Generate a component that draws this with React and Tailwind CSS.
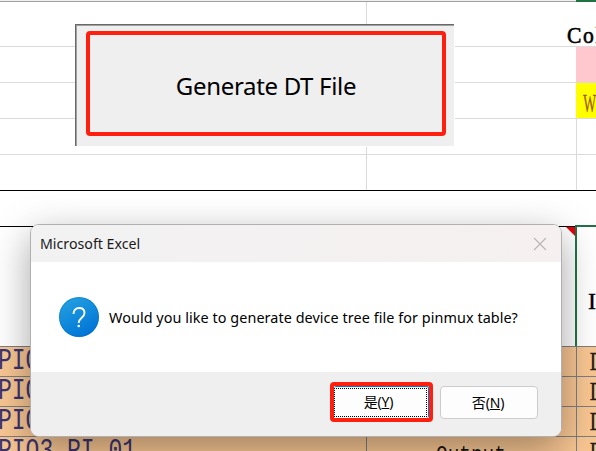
import React from "react";

const mono = "font-['Liberation_Mono',monospace]";
const serif = "font-['Liberation_Serif',serif]";

function Row({ h, line, a, b, c, bg = "", colLine = "border-[#dadada]", cClass = "" }) {
  return (
    <div className={`grid shrink-0 grid-cols-[367px_210px_19px] overflow-hidden border-b ${h} ${line} ${bg}`}>
      <div className={`border-r ${colLine} overflow-hidden`}>{a}</div>
      <div className={`border-r ${colLine} overflow-hidden`}>{b}</div>
      <div className={cClass}>{c}</div>
    </div>
  );
}

function PinText({ children }) {
  return (
    <span className={`${mono} mt-[1px] -ml-[2px] block origin-center scale-y-125 text-[23px] leading-[29px] whitespace-pre text-[#3c3470]`}>
      {children}
    </span>
  );
}

function DataRow({ name, out }) {
  return (
    <Row
      h="h-[30px]"
      line="border-[#7b7f84]"
      colLine="border-[#7b7f84]"
      bg="bg-[#f8c692]"
      a={<PinText>{name}</PinText>}
      b={out && <span className={`${mono} block origin-top scale-y-120 pt-[3px] pl-[69px] text-[19.4px] leading-[26px] text-[#1a1410]`}>{out}</span>}
      c={<span className={`${serif} block origin-left scale-x-80 pl-[16px] text-[25px] leading-[30px] text-[#221c1c] [-webkit-text-stroke:0.3px_#221c1c]`}>D</span>}
    />
  );
}

function Sheet() {
  return (
    <div className="flex h-[451px] w-[596px] flex-col overflow-hidden bg-white">
      <div className="flex h-[2px] shrink-0 border-b border-[#a0a0a0] bg-[#f0f0f0]">
        <div className="w-[576px]" />
        <div className="h-[2px] flex-1 bg-[#217346]" />
      </div>
      <div className="grid h-[45px] shrink-0 grid-cols-[367px_200px_29px] border-b border-[#dadada]">
        <div className="border-r border-[#dadada]" />
        <div />
        <div className="overflow-hidden pt-[20px]">
          <span className={`${serif} block w-[40px] origin-left scale-x-90 text-[24px] leading-[27px] tracking-[1.8px] [-webkit-text-stroke:0.6px_black]`}>
            Col
          </span>
        </div>
      </div>
      <Row h="h-[36px]" line="border-[#dadada]" cClass="-ml-[1px] -mt-px bg-[#ffc7ce]" />
      <Row
        h="h-[36px]"
        line="border-[#dadada]"
        cClass="-ml-[1px] -mt-px -mb-px bg-[#ffff00]"
        c={
          <span className={`${serif} block w-[40px] origin-left scale-x-52 pt-[8px] pl-[14px] text-[26px] leading-[28px] text-[#9c5700] [-webkit-text-stroke:0.3px_#9c5700]`}>
            W
          </span>
        }
      />
      <Row h="h-[36px]" line="border-[#dadada]" />
      <Row h="h-[36px]" line="border-black" />
      <div className="h-[36px] shrink-0 border-b border-black" />
      <div className="grid h-[120px] shrink-0 grid-cols-[575px_21px] border-b border-[#7b7f84]">
        <div className="flex justify-end">
          <div className="h-[9px] w-[9px] bg-red-600 [clip-path:polygon(0_0,100%_0,100%_100%)]" />
        </div>
        <div className="-mt-[2px] border-t-2 border-l-2 border-[#217346]">
          <span className={`${serif} block pt-[60px] pl-[11px] text-[24px] leading-[28px] [-webkit-text-stroke:0.4px_black]`}>I</span>
        </div>
      </div>
      <DataRow name="PIO3_PI_04" />
      <DataRow name="PIO3_PI_03" />
      <DataRow name="PIO3_PI_02" />
      <DataRow name="PIO3_PI_01" out="Output" />
    </div>
  );
}

function QuestionIcon() {
  return (
    <svg width="40" height="40" viewBox="0 0 40 40" fill="none">
      <defs>
        <linearGradient id="blue" x1="8" y1="2" x2="28" y2="39" gradientUnits="userSpaceOnUse">
          <stop stopColor="#229fe0" />
          <stop offset="1" stopColor="#0074d6" />
        </linearGradient>
      </defs>
      <circle cx="20" cy="20" r="20" fill="url(#blue)" />
      <circle cx="20" cy="20" r="19.4" stroke="#0868b8" strokeOpacity=".35" />
      <path d="M14.500 17c0-3.700 2.200-6 5.600-6 3.300 0 5.400 2 5.400 5 0 4.700-5.800 5-5.800 10" stroke="white" strokeWidth="1.9" />
      <circle cx="19.700" cy="29" r="1.300" fill="white" />
    </svg>
  );
}

function Dialog() {
  return (
    <div className="absolute top-[224px] left-[30px] flex h-[213px] w-[532px] flex-col overflow-hidden rounded-[9px] border border-[#b0b0b0] bg-white font-['Noto_Sans','Noto_Sans_CJK_SC',sans-serif] text-black">
      <div className="flex h-[37px] shrink-0 items-center justify-between bg-gradient-to-r from-[#f2f2f3] to-[#f6f0f0] pr-[14px] pl-[9px]">
        <span className="text-[14.2px] text-[#1a1a1a]">Microsoft Excel</span>
        <svg width="14" height="14" viewBox="0 0 14 14" stroke="#b9b5b5" strokeWidth="1.1">
          <path d="M1 1l12 12M13 1L1 13" />
        </svg>
      </div>
      <div className="flex h-[110px] shrink-0 items-center gap-[10px] pl-[28px]">
        <QuestionIcon />
        <span className="pt-[2px] text-[14.4px] tracking-[0.06px] whitespace-nowrap">Would you like to generate device tree file for pinmux table?</span>
      </div>
      <div className="flex flex-1 items-start justify-end gap-[7px] bg-[#efefef] pt-[10px] pr-[23px] text-[14px] tracking-[-0.2px]">
        <div className="h-[40px] w-[103px] rounded-[4px] border-4 border-[#ff1f0f] bg-[#fdfdfd]">
          <div className="flex h-full items-center justify-center rounded-[2px] border-t border-r border-[#0078d4]">
            <div className="mr-px flex h-[29px] w-full items-center justify-center border border-dotted border-black pr-[4px] pb-[2px]">
              <span>是(<span className="underline">Y</span>)</span>
            </div>
          </div>
        </div>
        <div className="mt-[4px] flex h-[33px] w-[98px] items-center justify-center rounded-[4px] border border-[#cccccc] bg-[#fdfdfd] pr-[2px] pb-[1px]">
          <span>否(<span className="underline">N</span>)</span>
        </div>
      </div>
    </div>
  );
}

export default function App() {
  return (
    <div className="relative h-[451px] w-[596px] overflow-hidden bg-white">
      <Sheet />
      <div className="absolute top-[24px] left-[75px] h-[123px] w-[380px] border-r border-b border-white bg-white">
        <div className="h-[122px] w-[379px] border-t border-l border-[#696969]">
          <div className="h-full w-full border-t border-l border-[#a0a0a0] bg-[#efefef] pt-[5px] pl-[9px]">
            <div className="flex h-[105px] w-[360px] items-center justify-center rounded-[4px] border-4 border-[#ff1f0f] pt-[5px] font-['Noto_Sans',sans-serif] text-[24px] tracking-[-0.32px]">
              Generate DT File
            </div>
          </div>
        </div>
      </div>
      <div className="absolute top-[224px] left-[30px] h-[213px] w-[532px] rounded-[9px] shadow-[0_12px_38px_rgba(0,0,0,0.36)]" />
      <Dialog />
    </div>
  );
}
